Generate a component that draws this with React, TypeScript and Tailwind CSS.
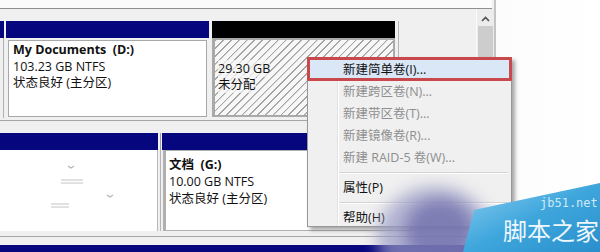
import React from "react";

const font = "font-['Open_Sans','Noto_Sans_CJK_SC',sans-serif]";

function FaintMarks() {
  return (
    <svg className="absolute left-0 top-0" width="158" height="82" viewBox="0 0 158 82">
      <path d="M68 16 l3 2 l3 -2" stroke="#b5b5b5" strokeWidth="1.2" fill="none" />
      <path d="M61 30 h22 M61 33 h22" stroke="#c4c4c4" strokeWidth="1" />
      <path d="M107 45 l3 2 l3 -2" stroke="#b5b5b5" strokeWidth="1.2" fill="none" />
      <path d="M51 54 h18 M51 57 h18" stroke="#c4c4c4" strokeWidth="1" />
    </svg>
  );
}

const menuItems = [
  { label: "新建简单卷(I)...", enabled: true },
  { label: "新建跨区卷(N)...", enabled: false },
  { label: "新建带区卷(T)...", enabled: false },
  { label: "新建镜像卷(R)...", enabled: false },
  { label: "新建 RAID-5 卷(W)...", enabled: false },
];

function MenuItem({ label, enabled, active }: { label: string; enabled: boolean; active?: boolean }) {
  return (
    <div
      className={`h-[22px] flex items-center pl-[34px] text-[12.5px] ${
        enabled ? "text-[#111]" : "text-[#8e8e8e]"
      } ${active ? "bg-[#d9e7f7]" : ""}`}
    >
      {label}
    </div>
  );
}

function Separator() {
  return <div className="ml-[30px] mr-[2px] my-[3px] h-px bg-[#d4d4d4] border-b border-white box-content" />;
}

export default function App() {
  return (
    <div
      className={`relative w-[600px] h-[252px] overflow-hidden flex bg-gradient-to-r from-[#e4e4e4] via-[#f7f7f7] to-white ${font}`}
    >
      {/* window */}
      <div className="w-[496px] h-full flex flex-col bg-[#f0f0f0] border-r-2 border-[#c4c4c4]">
        <div className="h-[9px] shrink-0 bg-[#fbfbfb] border-b border-[#8f8f8f] mr-[2px]" />
        <div className="flex flex-1">
          {/* disk area */}
          <div className="w-[476px] flex flex-col">
            <div className="h-[12px] shrink-0" />
            {/* row 1 */}
            <div className="flex h-[100px] shrink-0 border-b border-[#a6a6a6]">
              <div className="w-[4px] flex flex-col">
                <div className="h-[17px] bg-[#06067e]" />
                <div className="flex-1 border-r border-[#b0b0b0] mb-[2px]" />
              </div>
              <div className="w-[2px]" />
              <div className="w-[203px] flex flex-col">
                <div className="h-[17px] bg-[#06067e]" />
                <div className="flex-1 p-[2px] pb-[3px]">
                  <div className="h-full bg-white border border-[#a8a8a8] pl-[4px] pt-[1px] text-[12.5px] leading-[16.5px] text-[#111]">
                    <div className="font-bold whitespace-pre">My Documents  (D:)</div>
                    <div>103.23 GB NTFS</div>
                    <div>状态良好 (主分区)</div>
                  </div>
                </div>
              </div>
              <div className="w-[3px]" />
              <div className="w-[183px] flex flex-col">
                <div className="h-[17px] bg-black" />
                <div className="flex-1 pb-[3px]">
                  <div className="h-full border-2 border-l-[3px] border-[#a9a9a9] bg-[repeating-linear-gradient(135deg,#a4a4a4_0px,#a4a4a4_1px,#f7f7f7_1.5px,#f7f7f7_5.5px)] pl-[3px] pt-[21px] text-[12.5px] leading-[16px] text-[#111]">
                    <div>
                      <span className="bg-[#f7f7f7]/70">29.30 GB</span>
                    </div>
                    <div>
                      <span className="bg-[#f7f7f7]/70">未分配</span>
                    </div>
                  </div>
                </div>
              </div>
              <div className="w-[3px]" />
              <div className="w-px bg-[#b5b5b5]" />
            </div>
            <div className="h-[12px] shrink-0" />
            {/* row 2 */}
            <div className="flex h-[104px] shrink-0 border-b border-[#a6a6a6]">
              <div className="w-[158px] flex flex-col">
                <div className="h-[17px] bg-[#06067e]" />
                <div className="flex-1 pb-[5px]">
                  <div className="relative h-full bg-white border-r border-[#b8b8b8]">
                    <FaintMarks />
                  </div>
                </div>
              </div>
              <div className="w-[4px] flex flex-col">
                <div className="h-[17px] flex justify-center">
                  <div className="w-px bg-[#9a9ab8]" />
                </div>
                <div className="flex-1 flex justify-center pb-[5px]">
                  <div className="w-px bg-[#b5b5b5]" />
                </div>
              </div>
              <div className="w-[250px] flex flex-col">
                <div className="h-[17px] bg-[#06067e]" />
                <div className="flex-1 pb-[5px] pl-[1px]">
                  <div className="h-full bg-white border border-l-[3px] border-[#b0b0b0] pl-[3px] pt-[5px] text-[12.5px] leading-[17px] text-[#111]">
                    <div className="font-bold whitespace-pre">文档  (G:)</div>
                    <div>10.00 GB NTFS</div>
                    <div>状态良好 (主分区)</div>
                  </div>
                </div>
              </div>
            </div>
            <div className="h-[8px] shrink-0" />
            <div className="flex-1 bg-[#06067e]" />
          </div>
          {/* scrollbar */}
          <div className="w-[18px] flex flex-col border-l border-[#fbfbfb] bg-[#ececec]">
            <div className="h-[17px] flex items-center justify-center pt-[2px]">
              <svg width="9" height="6" viewBox="0 0 9 6">
                <path d="M1 5 L4.5 1.5 L8 5" stroke="#505050" strokeWidth="1.6" fill="none" />
              </svg>
            </div>
            <div className="mx-[1px] h-[80px] bg-[#cdcdcd]" />
          </div>
        </div>
      </div>

      {/* context menu */}
      <div className="absolute left-[307px] top-[57px] w-[205px] h-[170px] bg-[#f0f0f0] border border-[#979797] shadow-[3px_3px_4px_rgba(0,0,0,0.35)] pt-[1px] px-[1px]">
        <div className="absolute left-[29px] top-0 bottom-0 w-[2px] border-l border-[#e2e2e2] border-r border-r-white" />
        <div className="relative">
          {menuItems.map((item, i) => (
            <MenuItem key={item.label} label={item.label} enabled={item.enabled} active={i === 0} />
          ))}
          <Separator />
          <MenuItem label="属性(P)" enabled />
          <Separator />
          <MenuItem label="帮助(H)" enabled />
        </div>
      </div>
      {/* red highlight annotation */}
      <div className="absolute left-[307px] top-[57px] w-[205px] h-[24px] border-[3px] border-[#c8484c] rounded-[1px]" />

      {/* watermark */}
      <svg className="absolute left-[340px] top-[160px]" width="260" height="92" viewBox="0 0 260 92">
        <defs>
          <filter id="wmSoft" x="-50%" y="-50%" width="200%" height="200%">
            <feGaussianBlur stdDeviation="8" />
          </filter>
          <linearGradient id="wmBlue" x1="0" y1="0" x2="1" y2="1">
            <stop offset="0%" stopColor="#8fd0f2" />
            <stop offset="50%" stopColor="#3fa6dc" />
            <stop offset="100%" stopColor="#2a8fcc" />
          </linearGradient>
        </defs>
        <g filter="url(#wmSoft)">
          <ellipse cx="95" cy="78" rx="58" ry="52" fill="#9a9ac6" fillOpacity="0.7" />
          <ellipse cx="100" cy="72" rx="36" ry="34" fill="#6c6cab" fillOpacity="0.75" />
        </g>
        <polygon points="123,92 134,50 260,23 260,92" fill="url(#wmBlue)" />
      </svg>
      <div className="absolute left-[540px] top-[197px] text-[12px] leading-[13px] text-[#cde9f8] font-['DejaVu_Sans_Mono',monospace]">
        jb51.net
      </div>
      <div className="absolute left-[503px] top-[215px] text-[24px] leading-[30px] text-[#eef8fe] font-['Noto_Sans_CJK_SC',sans-serif]">
        脚本之家
      </div>
    </div>
  );
}
